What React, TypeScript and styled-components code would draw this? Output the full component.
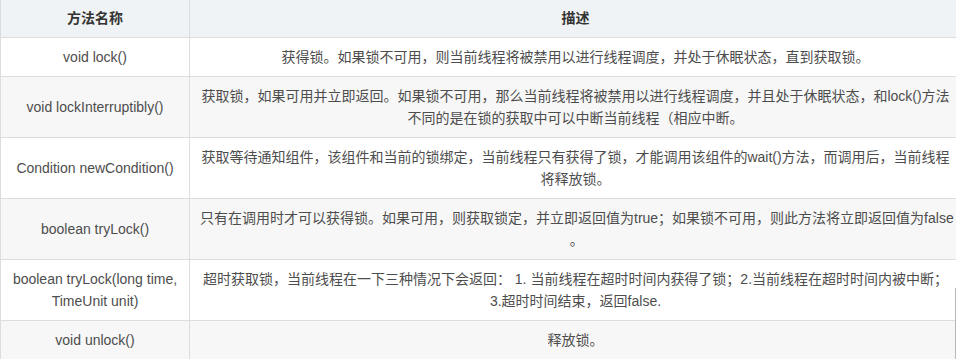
import React from "react";
import styled, { createGlobalStyle } from "styled-components";

const Global = createGlobalStyle`
  html, body { margin: 0; padding: 0; background: #fff; overflow: hidden; }
  body { font-family: "Liberation Sans", "Noto Sans CJK SC", sans-serif; }
`;

const Page = styled.div`
  position: relative;
  width: 956px;
  height: 359px;
  overflow: hidden;
`;

const Table = styled.div`
  width: 960px;
  border-left: 1px solid #dddddd;
  font-size: 14px;
  color: #4d4d4d;
`;

const Row = styled.div<{ $bg: string; $head?: boolean }>`
  display: grid;
  grid-template-columns: 189px 1fr;
  background: ${(p) => p.$bg};
  border-bottom: 1px solid #dddddd;
  ${(p) => (p.$head ? "font-weight: bold; color: #333333;" : "")}
`;

const Cell = styled.div<{ $head?: boolean; $first?: boolean }>`
  display: flex;
  flex-direction: column;
  align-items: center;
  justify-content: center;
  text-align: center;
  padding: ${(p) => (p.$head ? "7px 10px 8px" : "8px 10px")};
  line-height: 22px;
  ${(p) => (p.$first ? "border-right: 1px solid #dddddd;" : "")}
`;

const Line = styled.span`
  display: block;
  white-space: nowrap;
`;

const EdgeMark = styled.div`
  position: absolute;
  left: 955px;
  top: 288px;
  width: 1px;
  height: 71px;
  background: #b8b8b8;
`;

type R = { name: string[]; desc: string[] };

const rows: R[] = [
  {
    name: ["void lock()"],
    desc: ["获得锁。如果锁不可用，则当前线程将被禁用以进行线程调度，并处于休眠状态，直到获取锁。"],
  },
  {
    name: ["void lockInterruptibly()"],
    desc: [
      "获取锁，如果可用并立即返回。如果锁不可用，那么当前线程将被禁用以进行线程调度，并且处于休眠状态，和lock()方法",
      "不同的是在锁的获取中可以中断当前线程（相应中断。",
    ],
  },
  {
    name: ["Condition newCondition()"],
    desc: [
      "获取等待通知组件，该组件和当前的锁绑定，当前线程只有获得了锁，才能调用该组件的wait()方法，而调用后，当前线程",
      "将释放锁。",
    ],
  },
  {
    name: ["boolean tryLock()"],
    desc: [
      "只有在调用时才可以获得锁。如果可用，则获取锁定，并立即返回值为true；如果锁不可用，则此方法将立即返回值为false",
      "。",
    ],
  },
  {
    name: ["boolean tryLock(long time,", "TimeUnit unit)"],
    desc: [
      "超时获取锁，当前线程在一下三种情况下会返回： 1. 当前线程在超时时间内获得了锁；2.当前线程在超时时间内被中断；",
      "3.超时时间结束，返回false.",
    ],
  },
  {
    name: ["void unlock()"],
    desc: ["释放锁。"],
  },
];

export default function App() {
  return (
    <Page>
      <Global />
      <Table>
        <Row $bg="#eff3f5" $head>
          <Cell $head $first>方法名称</Cell>
          <Cell $head>描述</Cell>
        </Row>
        {rows.map((r, i) => (
          <Row key={i} $bg={i % 2 === 0 ? "#ffffff" : "#f7f7f7"}>
            <Cell $first>
              {r.name.map((t, j) => (
                <Line key={j}>{t}</Line>
              ))}
            </Cell>
            <Cell>
              {r.desc.map((t, j) => (
                <Line key={j}>{t}</Line>
              ))}
            </Cell>
          </Row>
        ))}
      </Table>
      <EdgeMark />
    </Page>
  );
}
